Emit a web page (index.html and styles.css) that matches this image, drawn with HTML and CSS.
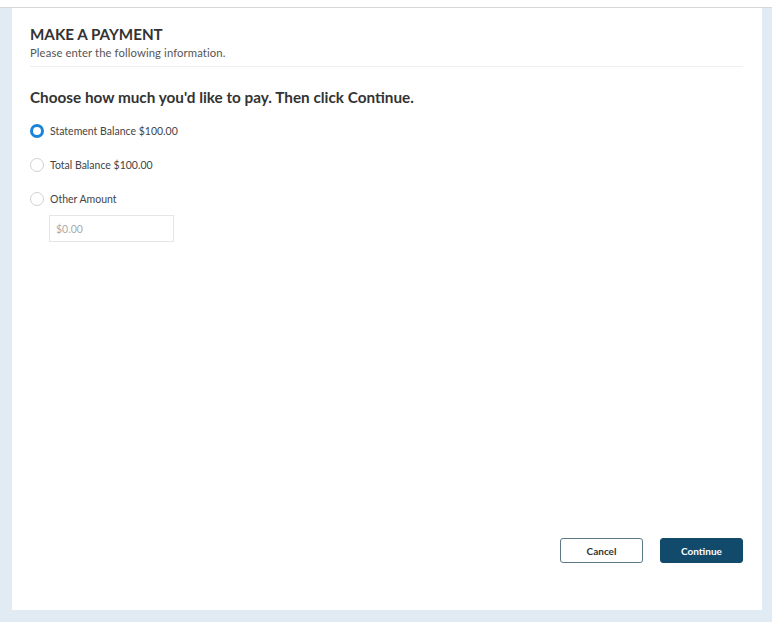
FILE: index.html
```html
<!DOCTYPE html>
<html lang="en">
<head>
    <meta charset="UTF-8">
    <meta name="viewport" content="width=device-width, initial-scale=1.0">
    <title>Make a Payment</title>
    <link rel="stylesheet" href="styles.css">
</head>
<body>
    <div class="topbar"></div>
    <div class="page">
        <main class="card">
            <header class="card-header">
                <h1>MAKE A PAYMENT</h1>
                <p>Please enter the following information.</p>
            </header>
            <h2>Choose how much you'd like to pay. Then click Continue.</h2>
            <form class="options" id="paymentForm">
                <label class="option">
                    <input type="radio" name="amount" value="statement" checked>
                    <span>Statement Balance $100.00</span>
                </label>
                <label class="option">
                    <input type="radio" name="amount" value="total">
                    <span>Total Balance $100.00</span>
                </label>
                <label class="option">
                    <input type="radio" name="amount" value="other">
                    <span>Other Amount</span>
                </label>
                <input type="text" class="amount-input" placeholder="$0.00">
            </form>
            <div class="actions">
                <button type="button" class="btn btn-outline">Cancel</button>
                <button type="submit" form="paymentForm" class="btn btn-primary">Continue</button>
            </div>
        </main>
    </div>
</body>
</html>
```

FILE: styles.css
```css
body {
    font-family: Lato, 'Open Sans', sans-serif;
    color: #333;
    background-color: #e1ebf3;
    margin: 0;
    padding: 0;
    height: 622px;
    display: flex;
    flex-direction: column;
}
.topbar {
    height: 7px;
    background-color: #fff;
    border-bottom: 1px solid #d6d8da;
}
.page {
    flex: 1;
    display: flex;
    padding: 0 10px 12px 12px;
}
.card {
    flex: 1;
    background-color: #fff;
    display: flex;
    flex-direction: column;
    padding: 17px 19px 47px 18px;
}
.card-header {
    border-bottom: 1px solid #eceeef;
    padding-bottom: 6px;
}
.card-header h1 {
    margin: 0;
    font-size: 15.2px;
    line-height: 18px;
    font-weight: 700;
    color: #333;
}
.card-header p {
    margin: 3px 0 0;
    font-size: 11.3px;
    line-height: 14px;
    letter-spacing: 0.1px;
    color: #555;
}
h2 {
    margin: 20px 0 0;
    font-size: 15.3px;
    line-height: 20px;
    font-weight: 700;
    color: #333;
}
.options {
    display: flex;
    flex-direction: column;
    margin-top: 15px;
}
.option {
    display: flex;
    align-items: center;
    height: 18px;
    margin-bottom: 16px;
    font-size: 10.5px;
    color: #444;
    cursor: pointer;
}
.option input {
    appearance: none;
    width: 14px;
    height: 14px;
    margin: 0 6px 0 0;
    border: 1px solid #cfd2d4;
    border-radius: 50%;
    background-color: #fff;
}
.option input:checked {
    border: 3px solid #1a84dc;
}
.amount-input {
    width: 125px;
    height: 27px;
    box-sizing: border-box;
    margin: -9px 0 0 19px;
    border: 1px solid #e3e5e7;
    padding: 0 6px;
    font-family: inherit;
    font-size: 10.5px;
    color: #333;
}
.amount-input::placeholder {
    color: #aaa;
}
.actions {
    margin-top: auto;
    display: flex;
    justify-content: flex-end;
    gap: 17px;
}
.btn {
    width: 83px;
    height: 25px;
    border-radius: 3px;
    font-family: inherit;
    font-size: 10px;
    font-weight: 700;
    cursor: pointer;
}
.btn-outline {
    background-color: #fff;
    border: 1px solid #5b7a86;
    color: #333;
}
.btn-primary {
    background-color: #114a6b;
    border: 1px solid #114a6b;
    color: #fff;
}
```
